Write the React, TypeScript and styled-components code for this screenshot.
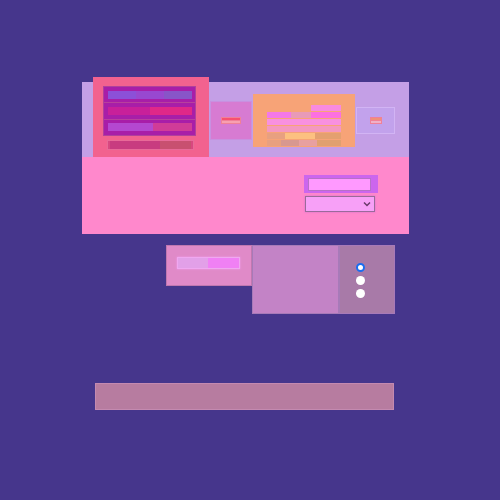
import React from "react";
import styled, { createGlobalStyle } from "styled-components";

const GlobalStyle = createGlobalStyle`
  html, body {
    margin: 0;
    padding: 0;
    background: #46368c;
    font-family: "Liberation Sans", Arial, sans-serif;
  }
`;

const Page = styled.div`
  width: 500px;
  height: 500px;
  padding: 82px 0 0 82px;
  box-sizing: border-box;
  display: flex;
  flex-direction: column;
`;

const Panel = styled.div`
  width: 327px;
  display: flex;
  flex-direction: column;
`;

const TopStrip = styled.div`
  height: 75px;
  background: #c49fe6;
  display: flex;
  align-items: flex-start;
  padding-left: 11px;
`;

const Card = styled.div`
  width: 116px;
  height: 80px;
  margin-top: -5px;
  background: #f2628f;
  box-sizing: border-box;
  padding: 9px 13px 0 10px;
  display: flex;
  flex-direction: column;
  gap: 4px;
`;

const Inner = styled.div`
  height: 50px;
  background: #a81ea8;
  display: flex;
  flex-direction: column;
  border: 1px solid #b0409c;
  box-sizing: border-box;
`;

const Row = styled.div`
  flex: 1;
  display: flex;
  align-items: center;
  padding: 0 3px 0 4px;
  border-bottom: 1px solid #b8409c;
  &:last-child {
    border-bottom: none;
  }
`;

const Seg = styled.div<{ $w: number; $c: string }>`
  width: ${(p) => p.$w}px;
  height: 8px;
  background: ${(p) => p.$c};
`;

const Footer = styled.div`
  margin: 0 2px 0 4px;
  height: 10px;
  background: #d84880;
  border: 1px solid #e86a98;
  display: flex;
  align-items: center;
  padding: 0 2px;
  box-sizing: border-box;
`;

const Tile = styled.div<{ $w: number; $h: number; $top: number; $bg: string; $edge?: string }>`
  width: ${(p) => p.$w}px;
  height: ${(p) => p.$h}px;
  margin-top: ${(p) => p.$top}px;
  margin-left: 1px;
  background: ${(p) => p.$bg};
  border: 1px solid ${(p) => p.$edge ?? p.$bg};
  box-sizing: border-box;
  display: flex;
  align-items: center;
  justify-content: center;
`;

const Lines = styled.div<{ $w: number }>`
  width: ${(p) => p.$w}px;
  display: flex;
  flex-direction: column;
  gap: 1px;
  padding: 1px;
  background: #f08098;
`;

const Line = styled.div<{ $c: string }>`
  height: 2px;
  background: ${(p) => p.$c};
`;

const Mini = styled.div`
  width: 74px;
  height: 41px;
  margin-top: 10px;
  display: flex;
  flex-direction: column;
  gap: 1px;
`;

const MiniRow = styled.div`
  display: flex;
  height: 6px;
`;

const Block = styled.div<{ $w: number; $c: string }>`
  width: ${(p) => p.$w}px;
  height: 100%;
  background: ${(p) => p.$c};
`;

const Bottom = styled.div`
  height: 77px;
  background: #ff88cc;
  display: flex;
  justify-content: flex-end;
  padding: 18px 31px 0 0;
  box-sizing: border-box;
`;

const Form = styled.div`
  width: 74px;
  display: flex;
  flex-direction: column;
  gap: 2px;
`;

const InputWrap = styled.div`
  background: #cc66ee;
  height: 18px;
  padding: 3px 7px 2px 4px;
  box-sizing: border-box;
`;

const Input = styled.div`
  height: 100%;
  background: #ff99ff;
  border: 1px solid #b870c8;
  box-sizing: border-box;
`;

const Select = styled.div`
  margin: 1px 3px 0 1px;
  height: 16px;
  background: #f7a0f7;
  border: 1px solid #9a6a9a;
  box-shadow: 0 0 2px #d070d0;
  box-sizing: border-box;
  display: flex;
  justify-content: flex-end;
  align-items: center;
  padding-right: 3px;
`;

const Second = styled.div`
  margin: 11px 0 0 84px;
  display: flex;
  align-items: flex-start;
`;

const BoxA = styled.div`
  width: 86px;
  height: 41px;
  background: #e08ac8;
  border: 1px solid #c078b0;
  box-sizing: border-box;
  padding: 11px 0 0 10px;
`;

const Bar = styled.div`
  width: 63px;
  height: 12px;
  display: flex;
  border: 1px solid #f0a8f0;
  box-shadow: 0 0 2px #f0a0f0;
  box-sizing: border-box;
`;

const BoxB = styled.div<{ $w: number; $bg: string }>`
  width: ${(p) => p.$w}px;
  height: 69px;
  background: ${(p) => p.$bg};
  border: 1px solid #a77ab8;
  box-sizing: border-box;
  padding: 17px 0 0 16px;
`;

const Radios = styled.div`
  display: flex;
  flex-direction: column;
  gap: 4px;
`;

const Radio = styled.div<{ $on?: boolean }>`
  width: 9px;
  height: 9px;
  border-radius: 50%;
  background: #fff;
  box-sizing: border-box;
  border: ${(p) => (p.$on ? "2px solid #1a6ef0" : "none")};
`;

const Long = styled.div`
  margin: 69px 0 0 13px;
  width: 299px;
  height: 27px;
  background: #b77ca0;
  border: 1px solid #c48ab0;
  box-sizing: border-box;
`;

export default function App() {
  return (
    <>
      <GlobalStyle />
      <Page>
        <Panel>
          <TopStrip>
            <Card>
              <Inner>
                <Row>
                  <Seg $w={28} $c="#8c50d8" />
                  <Seg $w={28} $c="#9848d0" />
                  <Seg $w={28} $c="#8855c8" />
                </Row>
                <Row>
                  <Seg $w={42} $c="#c8209a" />
                  <Seg $w={42} $c="#e02888" />
                </Row>
                <Row>
                  <Seg $w={45} $c="#b448d0" />
                  <Seg $w={39} $c="#d03c98" />
                </Row>
              </Inner>
              <Footer>
                <Seg $w={50} $c="#c83c80" />
                <Seg $w={31} $c="#c85070" />
              </Footer>
            </Card>
            <Tile $w={42} $h={39} $top={19} $bg="#d77bd2" $edge="#c890e0">
              <Lines $w={18}>
                <Line $c="#f85070" />
                <Line $c="#f8a0b0" />
              </Lines>
            </Tile>
            <Tile $w={102} $h={53} $top={12} $bg="#f7a377">
              <Mini>
                <MiniRow>
                  <Block $w={44} $c="#f7a377" />
                  <Block $w={30} $c="#f88ae0" />
                </MiniRow>
                <MiniRow>
                  <Block $w={24} $c="#f478e8" />
                  <Block $w={20} $c="#e89ab8" />
                  <Block $w={30} $c="#fc70e0" />
                </MiniRow>
                <MiniRow>
                  <Block $w={74} $c="#f890e0" />
                </MiniRow>
                <MiniRow>
                  <Block $w={74} $c="#f498c0" />
                </MiniRow>
                <MiniRow>
                  <Block $w={18} $c="#e8a080" />
                  <Block $w={30} $c="#fcc080" />
                  <Block $w={26} $c="#e4a070" />
                </MiniRow>
                <MiniRow>
                  <Block $w={14} $c="#e8a080" />
                  <Block $w={18} $c="#d89890" />
                  <Block $w={18} $c="#e8a0a0" />
                  <Block $w={24} $c="#e0a070" />
                </MiniRow>
              </Mini>
            </Tile>
            <Tile $w={39} $h={27} $top={25} $bg="#c2a2ec" $edge="#d2b4f4">
              <Lines $w={10}>
                <Line $c="#f09078" />
                <Line $c="#f0b0c8" />
              </Lines>
            </Tile>
          </TopStrip>
          <Bottom>
            <Form>
              <InputWrap>
                <Input />
              </InputWrap>
              <Select>
                <svg width="8" height="6" viewBox="0 0 8 6">
                  <path d="M1 1.5 L4 4.5 L7 1.5" stroke="#6a3a6a" strokeWidth="1.5" fill="none" />
                </svg>
              </Select>
            </Form>
          </Bottom>
        </Panel>
        <Second>
          <BoxA>
            <Bar>
              <Block $w={30} $c="#e2a0e8" />
              <Block $w={31} $c="#f080f4" />
            </Bar>
          </BoxA>
          <BoxB $w={87} $bg="#c383c6" />
          <BoxB $w={56} $bg="#a87aa8">
            <Radios>
              <Radio $on />
              <Radio />
              <Radio />
            </Radios>
          </BoxB>
        </Second>
        <Long />
      </Page>
    </>
  );
}
